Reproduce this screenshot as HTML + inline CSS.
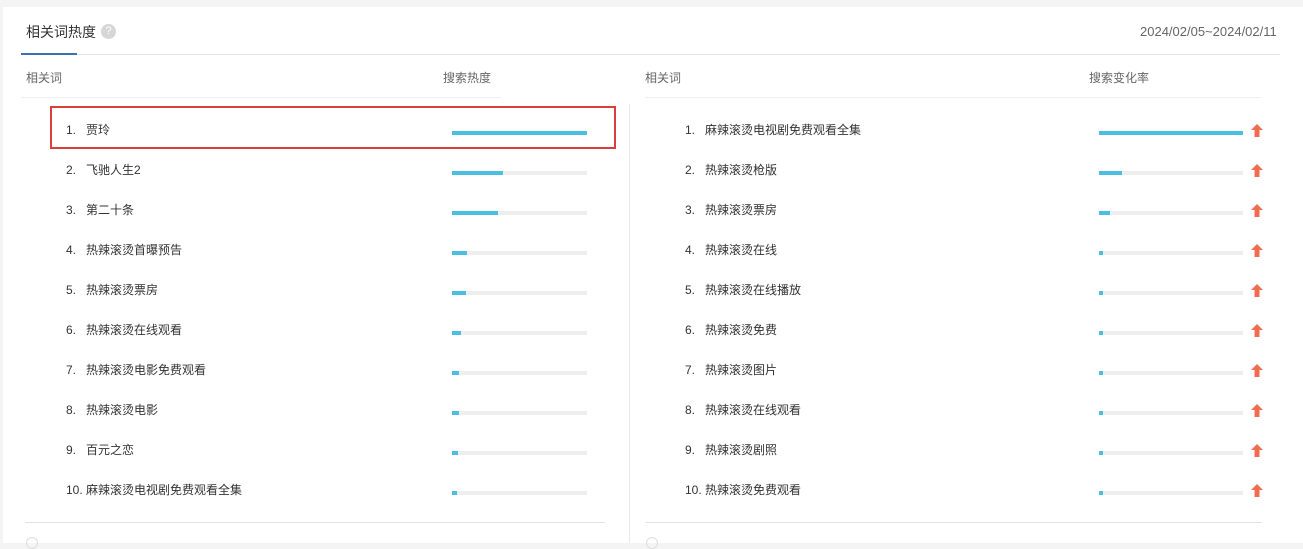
<!DOCTYPE html>
<html><head><meta charset="utf-8"><style>
*{margin:0;padding:0;box-sizing:border-box}
body{width:1303px;height:543px;background:#f4f4f4;font-family:"Liberation Sans","Noto Sans CJK SC",sans-serif;color:#333;font-size:12px;position:relative;overflow:hidden}
.card{position:absolute;left:3px;top:7px;width:1300px;height:536px;background:#fff}
.a{position:absolute;white-space:nowrap;line-height:16px}
.bar{position:absolute;height:4px;background:#eee}
.bar i{display:block;height:4px;background:#4bbfe3}
.arr{position:absolute;width:12px;height:13px}
</style></head><body>
<div class="card"></div>
<div class="a" style="left:26px;top:24px;font-size:14px;color:#333">相关词热度</div>
<div class="a" style="left:101px;top:24px;width:15px;height:15px;border-radius:50%;background:#d6d6d6;color:#fff;font-size:11px;text-align:center;line-height:15px">?</div>
<div class="a" style="left:1140px;top:24px;font-size:13px;color:#666">2024/02/05~2024/02/11</div>
<div class="a" style="left:21px;top:54px;width:1259px;height:1px;background:#e2e2e2"></div>
<div class="a" style="left:21px;top:53px;width:56px;height:2px;background:#3a73b5"></div>
<div class="a" style="left:26px;top:70px;color:#666">相关词</div>
<div class="a" style="left:443px;top:70px;color:#666">搜索热度</div>
<div class="a" style="left:645px;top:70px;color:#666">相关词</div>
<div class="a" style="left:1089px;top:70px;color:#666">搜索变化率</div>
<div class="a" style="left:21px;top:97px;width:480px;height:1px;background:#f0f0f0"></div>
<div class="a" style="left:645px;top:97px;width:617px;height:1px;background:#f0f0f0"></div>
<div class="a" style="left:629px;top:104px;width:1px;height:439px;background:#e8e8e8"></div>
<div class="a" style="left:25px;top:522px;width:580px;height:1px;background:#e2e2e2"></div>
<div class="a" style="left:645px;top:522px;width:617px;height:1px;background:#e2e2e2"></div>
<div class="a" style="left:26px;top:537px;width:12px;height:12px;border-radius:50%;border:1px solid #ddd"></div>
<div class="a" style="left:646px;top:537px;width:12px;height:12px;border-radius:50%;border:1px solid #ddd"></div>
<div class="a" style="left:50px;top:106px;width:566px;height:43px;border:2px solid #d9403a"></div>
<div id="rows"></div>
<script>
var L=["贾玲","飞驰人生2","第二十条","热辣滚烫首曝预告","热辣滚烫票房","热辣滚烫在线观看","热辣滚烫电影免费观看","热辣滚烫电影","百元之恋","麻辣滚烫电视剧免费观看全集"];
var LW=[135,51,46,15,14,9,7,7,6,5];
var R=["麻辣滚烫电视剧免费观看全集","热辣滚烫枪版","热辣滚烫票房","热辣滚烫在线","热辣滚烫在线播放","热辣滚烫免费","热辣滚烫图片","热辣滚烫在线观看","热辣滚烫剧照","热辣滚烫免费观看"];
var RW=[144,23,11,4,4,4,4,4,4,4];
var h="";
for(var i=0;i<10;i++){var y=122+40*i;var n=(i+1)+".";
h+='<div class="a" style="left:66px;top:'+y+'px">'+n+'</div>';
h+='<div class="a" style="left:86px;top:'+y+'px">'+L[i]+'</div>';
h+='<div class="bar" style="left:452px;top:'+(y+9)+'px;width:135px"><i style="width:'+LW[i]+'px"></i></div>';
h+='<div class="a" style="left:685px;top:'+y+'px">'+n+'</div>';
h+='<div class="a" style="left:705px;top:'+y+'px">'+R[i]+'</div>';
h+='<div class="bar" style="left:1099px;top:'+(y+9)+'px;width:144px"><i style="width:'+RW[i]+'px"></i></div>';
h+='<svg class="arr" style="left:1251px;top:'+(y+2)+'px" viewBox="0 0 12 13"><path d="M6 0L12 6H8.5V13H3.5V6H0Z" fill="#f06e4f"/></svg>';}
document.getElementById("rows").innerHTML=h;
</script>
</body></html>
